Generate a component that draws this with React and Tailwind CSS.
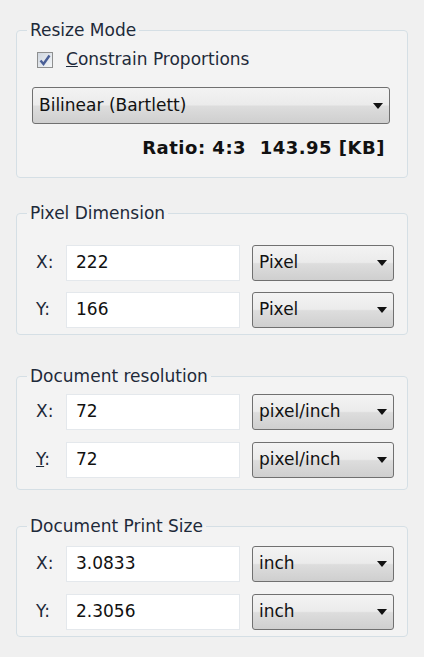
import { useState } from 'react'

const font = { fontFamily: '"DejaVu Sans", "Liberation Sans", sans-serif' }

function Arrow() {
  return (
    <svg width="10" height="6" viewBox="0 0 10 6" className="shrink-0">
      <path d="M0 0 H10 L5 6 Z" fill="#111" />
    </svg>
  )
}

function Select({ value, className = '' }) {
  return (
    <div
      className={`flex items-center justify-between rounded-[3px] border border-[#707070] bg-[linear-gradient(#f3f3f3_0%,#ebebeb_48%,#dddddd_52%,#cfcfcf_100%)] pl-[6px] pr-[6px] text-[#111] ${className}`}
    >
      <span>{value}</span>
      <Arrow />
    </div>
  )
}

function Group({ title, className = '', children }) {
  return (
    <fieldset className={`rounded-[4px] border border-[#d5dfe5] bg-[#f3f3f3] ${className}`}>
      <legend className="ml-[10px] px-[3px] leading-[22px] text-[#1e2a3a]">{title}</legend>
      {children}
    </fieldset>
  )
}

function Row({ label, underline, value, unit, className = '', selectClass = 'h-[36px]' }) {
  return (
    <div className={`flex items-center ${className}`}>
      <span className="w-[30px] text-[#1e2a3a]">
        {underline ? <span className="underline">{label}</span> : label}:
      </span>
      <div className="flex h-[36px] w-[174px] items-center border border-[#e4e8ec] bg-white pl-[9px] text-[#111]">
        {value}
      </div>
      <Select value={unit} className={`ml-[12px] w-[142px] ${selectClass}`} />
    </div>
  )
}

export default function App() {
  const [checked, setChecked] = useState(true)

  return (
    <div className="h-[657px] w-[424px] bg-[#f0f0f0] px-[16px] pt-[19px] text-[17px]" style={font}>
      <Group title="Resize Mode">
        <div className="pl-[15px] pr-[17px] pb-[19px]">
          <label className="mt-[8px] ml-[5px] flex h-[22px] items-center gap-[13px]" onClick={() => setChecked(!checked)}>
            <span className="flex h-[16px] w-[16px] items-center justify-center border border-[#8e8f8f] bg-[linear-gradient(135deg,#cfd6df,#f4f6f8)]">
              {checked && (
                <svg width="12" height="12" viewBox="0 0 12 12">
                  <path d="M1.5 6.5 L4.5 10 L10.5 1.5" fill="none" stroke="#4a5f97" strokeWidth="2.4" />
                </svg>
              )}
            </span>
            <span className="text-[#1e2a3a]">
              <span className="underline">C</span>onstrain Proportions
            </span>
          </label>
          <Select value="Bilinear (Bartlett)" className="mt-[16px] h-[37px]" />
          <div className="mt-[12px] flex h-[22px] items-center justify-end pr-[5px] text-[18px] font-bold tracking-[0.5px] text-[#111]">
            Ratio: 4:3&nbsp;&nbsp;143.95 [KB]
          </div>
        </div>
      </Group>

      <Group title="Pixel Dimension" className="mt-[24px]">
        <div className="pl-[19px] pb-[6px]">
          <Row label="X" value="222" unit="Pixel" className="mt-[21px]" />
          <Row label="Y" value="166" unit="Pixel" className="mt-[11px]" />
        </div>
      </Group>

      <Group title="Document resolution" className="mt-[30px]">
        <div className="pl-[19px] pb-[11px]">
          <Row label="X" value="72" unit="pixel/inch" className="mt-[7px]" />
          <Row label="Y" underline value="72" unit="pixel/inch" className="mt-[12px]" />
        </div>
      </Group>

      <Group title="Document Print Size" className="mt-[25px]">
        <div className="pl-[19px] pb-[6px]">
          <Row label="X" value="3.0833" unit="inch" className="mt-[9px]" />
          <Row label="Y" value="2.3056" unit="inch" className="mt-[12px]" />
        </div>
      </Group>
    </div>
  )
}
